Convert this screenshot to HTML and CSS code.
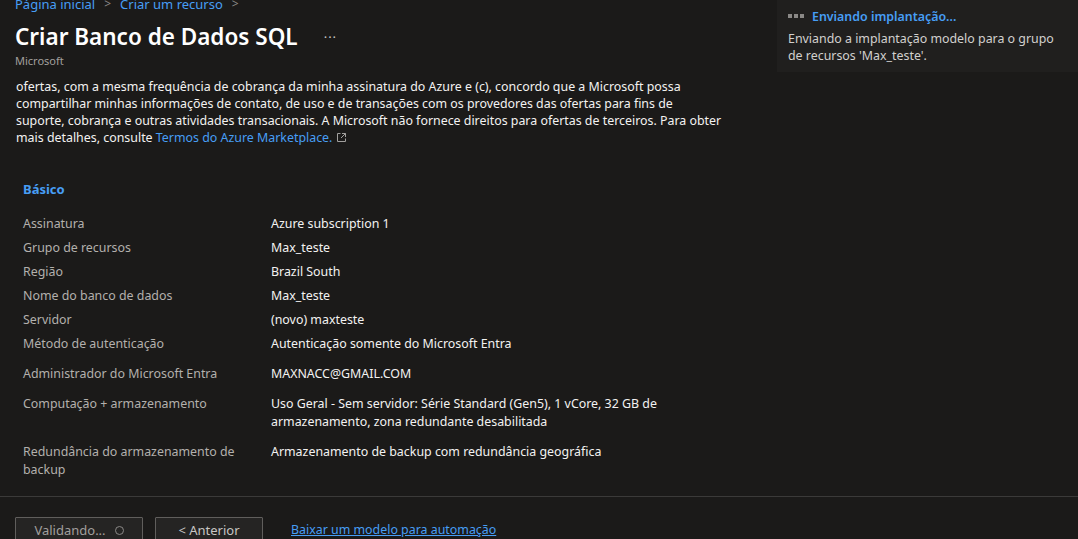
FILE: index.html
```html
<!DOCTYPE html>
<html lang="pt-BR">
<head>
<meta charset="utf-8">
<title>Criar Banco de Dados SQL</title>
<link rel="stylesheet" href="styles.css">
</head>
<body>
<div class="page">
  <header class="header">
    <nav class="crumbs">
      <a class="crumb" href="#">Página inicial</a>
      <span class="sep">&gt;</span>
      <a class="crumb" href="#">Criar um recurso</a>
      <span class="sep">&gt;</span>
    </nav>
    <div class="title-row">
      <h1 class="title">Criar Banco de Dados SQL</h1>
      <span class="more">···</span>
    </div>
    <div class="publisher">Microsoft</div>
  </header>

  <main class="content">
    <p class="terms">ofertas, com a mesma frequência de cobrança da minha assinatura do Azure e (c), concordo que a Microsoft possa<br>compartilhar minhas informações de contato, de uso e de transações com os provedores das ofertas para fins de<br>suporte, cobrança e outras atividades transacionais. A Microsoft não fornece direitos para ofertas de terceiros. Para obter<br>mais detalhes, consulte <a class="link" href="#">Termos do Azure Marketplace.</a> <svg class="ext" width="11" height="11" viewBox="0 0 11 11"><path d="M4.5 1.5H1.5V9.5H9.5V6.5" fill="none" stroke="#a19f9d" stroke-width="1"/><path d="M6 1.5H9.5V5M9.5 1.5L5 6" fill="none" stroke="#a19f9d" stroke-width="1"/></svg></p>

    <h2 class="section">Básico</h2>

    <div class="summary">
      <div class="label">Assinatura</div><div class="value">Azure subscription 1</div>
      <div class="label">Grupo de recursos</div><div class="value">Max_teste</div>
      <div class="label">Região</div><div class="value">Brazil South</div>
      <div class="label">Nome do banco de dados</div><div class="value">Max_teste</div>
      <div class="label">Servidor</div><div class="value">(novo) maxteste</div>
      <div class="label">Método de autenticação</div><div class="value">Autenticação somente do Microsoft Entra</div>
      <div class="label spaced">Administrador do Microsoft Entra</div><div class="value spaced">MAXNACC@GMAIL.COM</div>
      <div class="label spaced">Computação + armazenamento</div><div class="value spaced">Uso Geral - Sem servidor: Série Standard (Gen5), 1 vCore, 32 GB de armazenamento, zona redundante desabilitada</div>
      <div class="label spaced">Redundância do armazenamento de backup</div><div class="value spaced">Armazenamento de backup com redundância geográfica</div>
    </div>
  </main>

  <footer class="footer">
    <button class="btn btn-validate" disabled>Validando... <span class="spinner"></span></button>
    <button class="btn btn-prev">&lt; Anterior</button>
    <a class="link footer-link" href="#">Baixar um modelo para automação</a>
  </footer>
</div>

<aside class="toast">
  <div class="toast-head">
    <span class="dots"><i></i><i></i><i></i></span>
    <span class="toast-title">Enviando implantação...</span>
  </div>
  <div class="toast-body">Enviando a implantação modelo para o grupo de recursos 'Max_teste'.</div>
</aside>
</body>
</html>
```

FILE: styles.css
```css
html, body {
  margin: 0;
  padding: 0;
  height: 100%;
  overflow: hidden;
}
body {
  background: #1b1a19;
  color: #f3f2f1;
  font-family: "Noto Sans", "Open Sans", sans-serif;
  font-size: 12.4px;
  line-height: 17px;
}
.page {
  display: flex;
  flex-direction: column;
  height: 100vh;
}
.header {
  padding: 0 15px;
  flex: none;
}
.crumbs {
  display: flex;
  align-items: center;
  gap: 9px;
  margin-top: -5px;
  height: 18px;
  line-height: 18px;
  font-size: 13px;
}
.crumb {
  color: #479ef5;
  text-decoration: none;
}
.sep {
  color: #8a8886;
  font-size: 12px;
}
.title-row {
  display: flex;
  align-items: center;
  margin-top: 9px;
  height: 30px;
}
.title {
  margin: 0;
  font-size: 22.5px;
  font-weight: 600;
  line-height: 30px;
  color: #ffffff;
}
.more {
  margin-left: 26px;
  color: #c8c6c4;
  font-size: 13px;
  letter-spacing: 1px;
}
.publisher {
  font-size: 11px;
  line-height: 16px;
  color: #a19f9d;
  margin-top: 1px;
}
.content {
  flex: 1;
  padding: 0 16px;
  width: 720px;
  box-sizing: border-box;
}
.terms {
  margin: 9px 0 0 0;
  line-height: 17px;
  color: #f3f2f1;
  white-space: nowrap;
}
.link {
  color: #479ef5;
  text-decoration: none;
}
.ext {
  vertical-align: -1px;
}
.section {
  margin: 34px 0 0 7px;
  font-size: 13px;
  font-weight: 700;
  line-height: 18px;
  color: #479ef5;
}
.summary {
  display: grid;
  grid-template-columns: 248px 400px;
  row-gap: 6px;
  margin: 17px 0 0 7px;
  line-height: 18px;
}
.label {
  color: #b3b0ad;
  padding-right: 20px;
}
.value {
  color: #f3f2f1;
}
.spaced {
  margin-top: 6px;
}
.footer {
  flex: none;
  height: 43px;
  box-sizing: border-box;
  border-top: 1px solid #3b3a39;
  display: flex;
  align-items: flex-start;
  gap: 12px;
  padding: 20px 15px 0;
  overflow: hidden;
}
.btn {
  font-family: inherit;
  font-size: 13px;
  height: 26px;
  padding: 0;
  background: #252423;
  border: 1px solid #605e5c;
  color: #a19f9d;
  border-radius: 1px;
  display: flex;
  align-items: center;
  justify-content: center;
  gap: 9px;
  flex: none;
}
.btn-validate {
  width: 128px;
}
.btn-prev {
  width: 108px;
  color: #c8c6c4;
}
.spinner {
  flex: none;
  width: 9px;
  height: 9px;
  box-sizing: border-box;
  border: 1.5px solid #8a8886;
  border-radius: 50%;
}
.footer-link {
  margin-left: 16px;
  margin-top: 4px;
  text-decoration: underline;
}
.toast {
  position: absolute;
  top: 0;
  right: 0;
  width: 301px;
  height: 72px;
  background: #201f1e;
  box-sizing: border-box;
  padding: 6px 10px 0 11px;
}
.toast-head {
  display: flex;
  align-items: center;
  gap: 8px;
  height: 20px;
}
.dots {
  display: flex;
  gap: 2px;
}
.dots i {
  width: 4px;
  height: 4px;
  background: #8a8886;
  display: block;
}
.toast-title {
  color: #479ef5;
  font-weight: 600;
}
.toast-body {
  margin-top: 4px;
  color: #d2d0ce;
  line-height: 17px;
}
```
